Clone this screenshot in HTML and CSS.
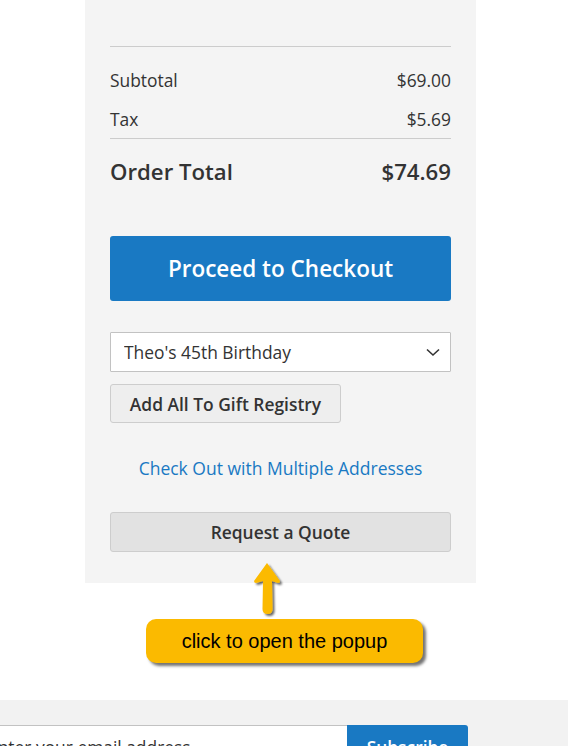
FILE: index.html
```html
<!DOCTYPE html>
<html lang="en">
<head>
  <meta charset="UTF-8" />
  <meta name="viewport" content="width=device-width, initial-scale=1.0" />
  <title>Shopping Cart Summary</title>
  <link rel="stylesheet" href="styles.css">
</head>
<body>
  <div class="summary">
    <div class="totals">
      <div class="row"><span>Subtotal</span><span>$69.00</span></div>
      <div class="row"><span>Tax</span><span>$5.69</span></div>
    </div>
    <div class="grand"><span>Order Total</span><span>$74.69</span></div>

    <button class="checkout">Proceed to Checkout</button>

    <div class="select-wrap">
      <select class="registry">
        <option>Theo's 45th Birthday</option>
      </select>
      <svg class="chevron" width="14" height="9" viewBox="0 0 14 9">
        <path d="M1 1.5 L7 7 L13 1.5" fill="none" stroke="#333" stroke-width="1.6" />
      </svg>
    </div>
    <button class="btn-secondary add-all">Add All To Gift Registry</button>

    <a class="multi" href="#">Check Out with Multiple Addresses</a>

    <button class="btn-secondary quote">Request a Quote</button>
  </div>

  <div class="annotation">
    <svg class="arrow" width="40" height="60" viewBox="0 0 40 60">
      <defs>
        <filter id="shadow" x="-30%" y="-30%" width="160%" height="160%">
          <feDropShadow dx="2" dy="2" stdDeviation="1.2" flood-color="#000" flood-opacity="0.6" />
        </filter>
      </defs>
      <path filter="url(#shadow)" fill="#fbba00"
        d="M18 2 L31 20 Q31 22 29 22 L23 20 L23.5 48 Q23.5 53 18.5 53 Q13.5 53 13.5 48 L14 20 L7 22 Q5 22 5 20 Z" />
    </svg>
    <div class="callout">click to open the popup</div>
  </div>

  <div class="footer">
    <form class="newsletter">
      <input type="email" placeholder="Enter your email address" />
      <button type="button">Subscribe</button>
    </form>
  </div>
</body>
</html>
```

FILE: styles.css
```css
body {
  margin: 0;
  background: #fff;
  font-family: 'Open Sans', sans-serif;
  color: #333;
  overflow: hidden;
}
.summary {
  margin-left: 85px;
  width: 391px;
  box-sizing: border-box;
  background: #f4f4f4;
  padding: 46px 25px 31px;
  display: flex;
  flex-direction: column;
}
.totals {
  border-top: 1px solid #ccc;
  border-bottom: 1px solid #ccc;
  padding-top: 13px;
}
.row {
  display: flex;
  justify-content: space-between;
  align-items: center;
  height: 39px;
  font-size: 17.4px;
}
.grand {
  display: flex;
  justify-content: space-between;
  align-items: center;
  height: 64px;
  font-size: 22.2px;
  font-weight: 600;
}
button {
  font-family: 'Open Sans', sans-serif;
  cursor: pointer;
}
.checkout {
  margin-top: 33px;
  height: 65px;
  border: none;
  border-radius: 3px;
  background: #1979c3;
  color: #fff;
  font-size: 22.5px;
  font-weight: 600;
}
.select-wrap {
  position: relative;
  margin-top: 31px;
}
.registry {
  display: block;
  width: 100%;
  height: 40px;
  appearance: none;
  -webkit-appearance: none;
  border: 1px solid #c2c2c2;
  border-radius: 1px;
  background: #fff;
  padding: 0 13px;
  font-family: 'Open Sans', sans-serif;
  font-size: 17.4px;
  color: #333;
}
.chevron {
  position: absolute;
  right: 11px;
  top: 16px;
}
.btn-secondary {
  border: 1px solid #cdcdcd;
  border-radius: 3px;
  background: #eee;
  color: #333;
  font-size: 17.4px;
  font-weight: 600;
}
.add-all {
  margin-top: 12px;
  align-self: flex-start;
  width: 231px;
  height: 39px;
  background: #eee;
}
.multi {
  margin-top: 33px;
  text-align: center;
  line-height: 24px;
  font-size: 17.5px;
  color: #1979c3;
  text-decoration: none;
}
.quote {
  margin-top: 32px;
  height: 40px;
  background: #e2e2e2;
}
.annotation {
  position: relative;
  padding: 36px 0 0 146px;
}
.arrow {
  position: absolute;
  left: 249px;
  top: -22px;
}
.callout {
  width: 277px;
  height: 44px;
  box-sizing: border-box;
  background: #fbba00;
  border-radius: 10px;
  box-shadow: 3px 3px 3px rgba(0, 0, 0, 0.55);
  font-family: 'Liberation Sans', Arial, sans-serif;
  font-size: 20px;
  color: #000;
  display: flex;
  align-items: center;
  justify-content: center;
}
.footer {
  margin-top: 37px;
  background: #f2f2f2;
  height: 60px;
  padding-top: 25px;
}
.newsletter {
  display: flex;
  margin-left: -23px;
}
.newsletter input {
  width: 370px;
  height: 44px;
  box-sizing: border-box;
  border: 1px solid #c2c2c2;
  border-right: none;
  padding: 0 10px;
  font-family: 'Open Sans', sans-serif;
  font-size: 17.4px;
}
.newsletter input::placeholder {
  color: #333;
}
.newsletter button {
  width: 121px;
  height: 44px;
  border: none;
  border-radius: 0 3px 3px 0;
  background: #1979c3;
  color: #fff;
  font-size: 17.4px;
  font-weight: 600;
}
```
